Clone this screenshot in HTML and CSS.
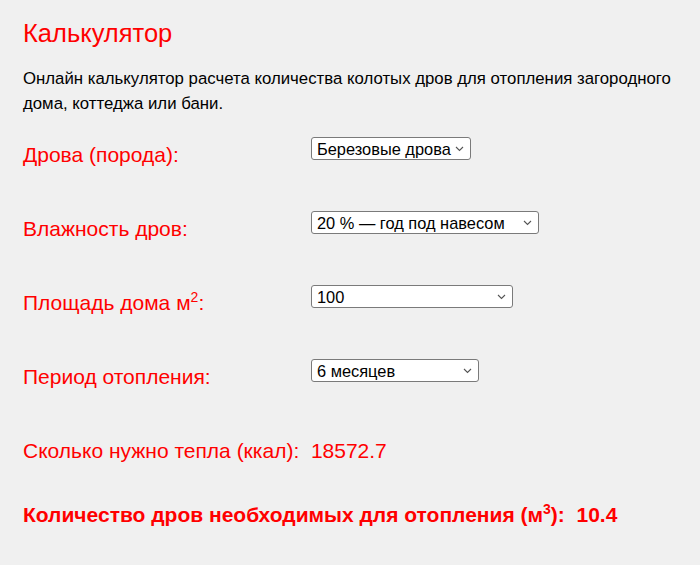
FILE: index.html
```html
<!DOCTYPE html>
<html lang="ru">
<head>
  <meta charset="UTF-8">
  <meta name="viewport" content="width=device-width, initial-scale=1.0">
  <title>Калькулятор дров</title>
  <link rel="stylesheet" href="styles.css">
</head>
<body>
  <div class="calc">
    <h1>Калькулятор</h1>
    <p class="intro">Онлайн калькулятор расчета количества колотых дров для отопления загородного дома, коттеджа или бани.</p>

    <div class="row">
      <label class="label" for="wood">Дрова (порода):</label>
      <div class="field">
        <select id="wood" class="select select-wood">
          <option>Березовые дрова</option>
          <option>Дубовые дрова</option>
          <option>Сосновые дрова</option>
        </select>
      </div>
    </div>

    <div class="row">
      <label class="label" for="humidity">Влажность дров:</label>
      <div class="field">
        <select id="humidity" class="select select-humidity">
          <option>20 % — год под навесом</option>
          <option>50 % — свежесрубленные</option>
        </select>
      </div>
    </div>

    <div class="row">
      <label class="label" for="area">Площадь дома м<sup>2</sup>:</label>
      <div class="field">
        <select id="area" class="select select-area">
          <option>100</option>
          <option>150</option>
          <option>200</option>
        </select>
      </div>
    </div>

    <div class="row">
      <label class="label" for="period">Период отопления:</label>
      <div class="field">
        <select id="period" class="select select-period">
          <option>6 месяцев</option>
          <option>9 месяцев</option>
          <option>12 месяцев</option>
        </select>
      </div>
    </div>

    <p class="result">Сколько нужно тепла (ккал):&nbsp; 18572.7</p>
    <p class="result result-total">Количество дров необходимых для отопления (м<sup>3</sup>):&nbsp; 10.4</p>
  </div>
</body>
</html>
```

FILE: styles.css
```css
body {
  margin: 0;
  background-color: #f0f0f0;
  font-family: "Liberation Sans", Arial, sans-serif;
  color: #000;
}
.calc {
  padding: 19px 23px;
}
h1 {
  margin: 0 0 18px;
  font-size: 25.5px;
  font-weight: normal;
  color: #ff0000;
}
.intro {
  margin: 0 0 21px;
  font-size: 16.8px;
  line-height: 25px;
}
.row {
  display: grid;
  grid-template-columns: 288px auto;
  align-items: start;
  height: 74px;
}
.label {
  margin-top: 6px;
  font-size: 21px;
  line-height: 23px;
  color: #ff0000;
}
sup {
  font-size: 14px;
  line-height: 0;
}
.select {
  appearance: none;
  -webkit-appearance: none;
  height: 23px;
  padding: 0 20px 0 5px;
  border: 1px solid #7a7a7a;
  border-radius: 3px;
  background-color: #fff;
  background-image: url("data:image/svg+xml,%3Csvg xmlns='http://www.w3.org/2000/svg' width='9' height='6' viewBox='0 0 9 6'%3E%3Cpath d='M1 1l3.5 3.5L8 1' fill='none' stroke='%23555' stroke-width='1.1'/%3E%3C/svg%3E");
  background-repeat: no-repeat;
  background-position: right 6px center;
  font-family: "Liberation Sans", Arial, sans-serif;
  font-size: 16.4px;
  color: #000;
}
.select-wood {
  width: 160px;
  padding-right: 14px;
}
.select-humidity {
  width: 228px;
}
.select-area {
  width: 202px;
}
.select-period {
  width: 168px;
}
.result {
  margin: 6px 0 0;
  font-size: 21px;
  line-height: 23px;
  color: #ff0000;
}
.result-total {
  margin-top: 41px;
  font-weight: bold;
}
```
